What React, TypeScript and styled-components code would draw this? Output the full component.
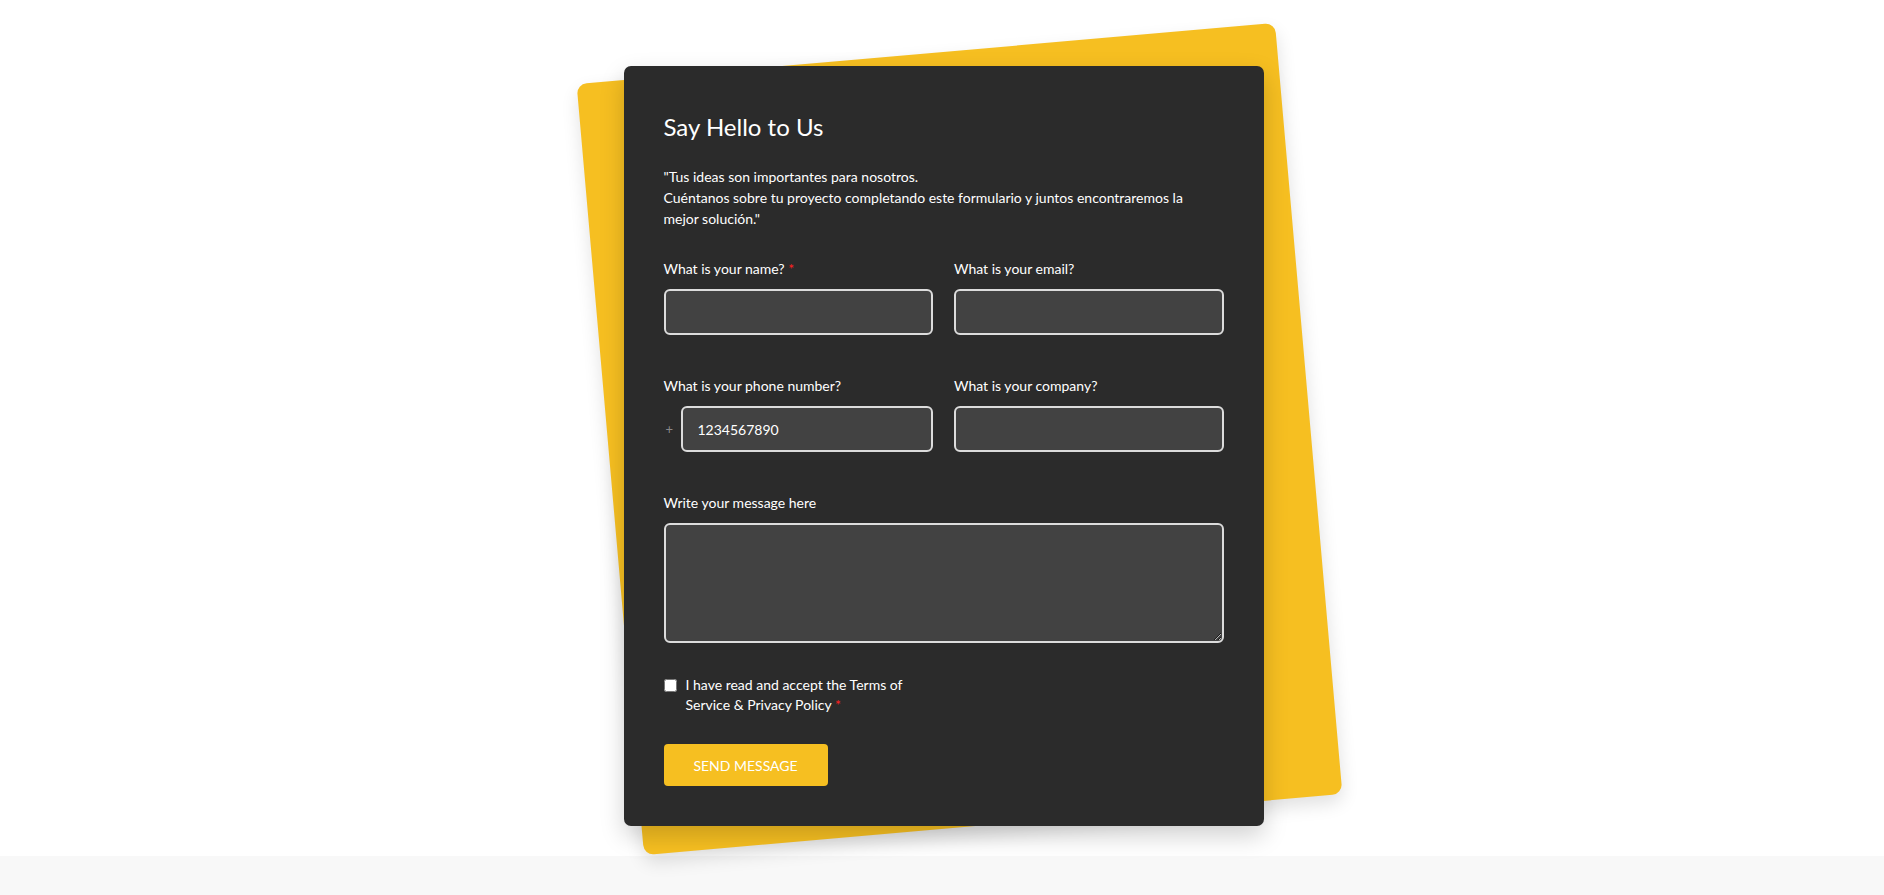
import * as React from 'react';
import styled, {createGlobalStyle} from 'styled-components';

const GlobalStyle = createGlobalStyle`
  body {
    margin: 0;
    font-family: 'Segoe UI', Lato, 'Noto Sans', sans-serif;
    background: #ffffff;
  }
  * {
    box-sizing: border-box;
  }
`;

const Page = styled.div`
  display: flex;
  flex-direction: column;
  min-height: 895px;
`;

const Section = styled.section`
  height: 856px;
  display: flex;
  justify-content: center;
  padding: 66px 0 0 3px;
  background: #ffffff;
`;

const Footer = styled.footer`
  flex: 1;
  background: #f8f8f8;
`;

const CardWrap = styled.div`
  position: relative;
  width: 640px;
  height: 760px;
`;

const Backdrop = styled.div`
  position: absolute;
  top: -14px;
  left: -15px;
  width: 701px;
  height: 774px;
  background: #f6bf21;
  border-radius: 10px;
  transform: rotate(-5deg);
  box-shadow: 0 8px 18px rgba(0, 0, 0, 0.12);
`;

const Card = styled.form`
  position: relative;
  height: 100%;
  background: #2b2b2b;
  border-radius: 7px;
  padding: 40px;
  color: #ffffff;
  box-shadow: 0 10px 24px rgba(0, 0, 0, 0.18);
`;

const Title = styled.h2`
  margin: 0 0 18px;
  font-size: 24px;
  font-weight: 400;
  line-height: 42px;
`;

const Intro = styled.p`
  max-width: 526px;
  margin: 0 0 29px;
  font-size: 14px;
  line-height: 21px;
`;

const Grid = styled.div`
  display: grid;
  grid-template-columns: 1fr 1fr;
  column-gap: 21px;
  row-gap: 40px;
`;

const Field = styled.div<{$wide?: boolean}>`
  display: flex;
  flex-direction: column;
  grid-column: ${p => (p.$wide ? '1 / -1' : 'auto')};
`;

const Label = styled.label`
  font-size: 14px;
  line-height: 21px;
  margin-bottom: 10px;
`;

const Required = styled.span`
  color: #ff2020;
`;

const inputStyle = `
  width: 100%;
  background: #424242;
  border: 2px solid #dcdcdc;
  border-radius: 6px;
  color: #ffffff;
  font-family: inherit;
  font-size: 14px;
  padding: 0 15px;
  outline: none;
`;

const Input = styled.input`
  ${inputStyle}
  height: 46px;
`;

const TextArea = styled.textarea`
  ${inputStyle}
  height: 120px;
  display: block;
  padding: 12px 15px;
  resize: vertical;
`;

const PhoneRow = styled.div`
  display: flex;
  align-items: center;
`;

const Prefix = styled.span`
  width: 17px;
  flex: none;
  padding-left: 2px;
  color: #8a8a8a;
  font-size: 13px;
`;

const Consent = styled.label`
  display: flex;
  align-items: flex-start;
  gap: 9px;
  width: 269px;
  margin: 32px 0 29px;
  font-size: 14px;
  line-height: 20px;
`;

const Check = styled.input`
  margin: 4px 0 0;
  width: 13px;
  height: 13px;
  flex: none;
`;

const ConsentText = styled.span`
  flex: 1;
`;

const SendButton = styled.button`
  width: 164px;
  height: 42px;
  border: none;
  border-radius: 4px;
  background: #f6bf21;
  color: #ffffff;
  font-family: inherit;
  font-size: 14px;
  text-transform: uppercase;
  cursor: pointer;
`;

export default function App() {
  return (
    <Page>
      <GlobalStyle />
      <Section>
        <CardWrap>
          <Backdrop />
          <Card onSubmit={e => e.preventDefault()}>
            <Title>Say Hello to Us</Title>
            <Intro>
              "Tus ideas son importantes para nosotros.
              <br />
              Cuéntanos sobre tu proyecto completando este formulario y juntos encontraremos la mejor solución."
            </Intro>
            <Grid>
              <Field>
                <Label>What is your name? <Required>*</Required></Label>
                <Input type='text' />
              </Field>
              <Field>
                <Label>What is your email?</Label>
                <Input type='email' />
              </Field>
              <Field>
                <Label>What is your phone number?</Label>
                <PhoneRow>
                  <Prefix>+</Prefix>
                  <Input type='tel' defaultValue='1234567890' />
                </PhoneRow>
              </Field>
              <Field>
                <Label>What is your company?</Label>
                <Input type='text' />
              </Field>
              <Field $wide>
                <Label>Write your message here</Label>
                <TextArea />
              </Field>
            </Grid>
            <Consent>
              <Check type='checkbox' />
              <ConsentText>
                I have read and accept the Terms of Service &amp; Privacy Policy <Required>*</Required>
              </ConsentText>
            </Consent>
            <SendButton type='submit'>Send message</SendButton>
          </Card>
        </CardWrap>
      </Section>
      <Footer />
    </Page>
  );
}
